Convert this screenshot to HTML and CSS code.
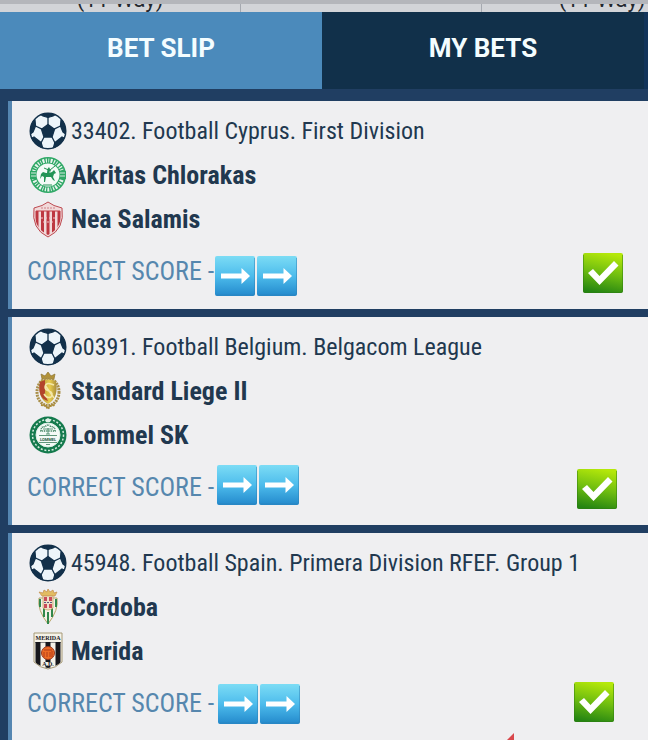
FILE: index.html
```
<!DOCTYPE html>
<html lang="en">
<head>
<meta charset="utf-8">
<meta name="viewport" content="width=device-width, initial-scale=1">
<title>Bet slip</title>
<link rel="stylesheet" href="styles.css">
</head>
<body>
<svg class="defs" aria-hidden="true">
  <defs>
    <linearGradient id="blue" x1="0" y1="0" x2="0" y2="1"><stop offset="0" stop-color="#7cdcf5"/><stop offset=".5" stop-color="#4dbcec"/><stop offset="1" stop-color="#2389cc"/></linearGradient>
    <linearGradient id="green" x1=".6" y1="0" x2=".4" y2="1"><stop offset="0" stop-color="#b5e80a"/><stop offset=".5" stop-color="#6fbd10"/><stop offset="1" stop-color="#258512"/></linearGradient>
    <linearGradient id="gold" x1="0" y1="0" x2="1" y2="0"><stop offset="0" stop-color="#a98938"/><stop offset=".6" stop-color="#e8cc4c"/><stop offset="1" stop-color="#a98d3c"/></linearGradient>
    <clipPath id="ballclip"><circle cx="19" cy="19" r="18"/></clipPath>
    <clipPath id="salclip"><path d="M6 9Q13 7 19 4Q25 7 32 9Q34 28 19 35Q4 28 6 9Z"/></clipPath>
    <clipPath id="merclip"><path d="M6 10H32V30Q27 35 19 36Q11 35 6 30Z"/></clipPath>
    <symbol id="ball" viewBox="0 0 38 38">
      <circle cx="19" cy="19" r="18" fill="#edf5fa"/>
      <g clip-path="url(#ballclip)" fill="#12304a" stroke="#12304a" stroke-width="1.3" stroke-linejoin="round">
        <path d="M19 12.500L25.500 17.200L23 25H15L12.500 17.200Z"/>
        <path d="M11 2L14 4L19 5.500L24 4L27 2V-2H11Z"/>
        <path d="M32 8L31.500 14L34 20L38 23V8Z"/>
        <path d="M6 8L6.500 14L4 20L0 23V8Z"/>
        <path d="M24 37L26 30.500L33 25L37 27L30 38Z"/>
        <path d="M14 37L12 30.500L5 25L1 27L8 38Z"/>
        <path fill="none" d="M19 13V5M25 17.200L31.500 14M23 25L26 31M15 25L12 31M13 17.200L6.500 14"/>
      </g>
      <circle cx="19" cy="19" r="17.800" fill="none" stroke="#12304a" stroke-width="1.400"/>
    </symbol>
    <symbol id="arrow" viewBox="0 0 40 40">
      <rect width="40" height="40" rx="2" fill="url(#blue)"/>
      <path d="M1 39H38Q39.500 39 39.500 37.500V2" fill="none" stroke="#3082b5" opacity=".5"/>
      <path d="M6 17.500H26.500V12L35 20L26.500 28V22.500H6Z" fill="#fff"/>
    </symbol>
    <symbol id="check" viewBox="0 0 40 40">
      <rect width="40" height="40" rx="2" fill="url(#green)"/>
      <path d="M.5 2V38Q.5 39.500 2 39.500H38Q39.500 39.500 39.500 38V2" fill="none" stroke="#2d7c12" opacity=".5"/>
      <path d="M5 20L10 16L16.500 23L31 8L35.500 12.500L16.500 32Z" fill="#fff"/>
    </symbol>
  </defs>
</svg>

<div class="odds"><span>(11 Way)</span><span></span><span>(11 Way)</span></div>
<nav class="tabs">
  <button class="tab active" type="button">BET SLIP</button>
  <button class="tab" type="button">MY BETS</button>
</nav>

<main class="slips">
  <article class="slip first">
    <p class="row event"><svg class="crest"><use href="#ball"/></svg>33402. Football Cyprus. First Division</p>
    <p class="row team"><svg class="crest" viewBox="0 0 38 38">
      <circle cx="19" cy="19" r="18" fill="#2fa866"/>
      <circle cx="19" cy="19" r="14.500" fill="none" stroke="#e9f4ee" stroke-width="4" stroke-dasharray="1.200 1.500 .8 1.400 2 1.300"/>
      <path d="M1 15H7V23H1ZM31 15H37V23H31Z" fill="#2fa866"/>
      <path d="M2 17H7M2 20H7M31 17H36M31 20H36" stroke="#d5eadf"/>
      <circle cx="19" cy="19" r="11.500" fill="#f3faf6"/>
      <path d="M12 18L14 16L17 17H20L23 16L25 14L27 17L25 18L24 21L26 25L24 24L22 21L17 21L16 26H15L15 21L13 20L11 23Z" fill="#229455"/>
      <path d="M18 17L18.500 13L20 11L21 13L20.500 17Z" fill="#229455"/>
      <path d="M21 14L26 10M15 12L22 15M14 29H23" stroke="#229455"/>
    </svg>Akritas Chlorakas</p>
    <p class="row team"><svg class="crest" viewBox="0 0 38 38">
      <path d="M5 8Q14 6 19 2Q24 6 33 8Q36 29 19 37Q2 29 5 8Z" fill="#f1d9d9" stroke="#bd4950"/>
      <g clip-path="url(#salclip)"><path d="M8 11V34M13.500 11V36M19 11V36M24.500 11V36M30 11V34" stroke="#bd3740" stroke-width="3"/></g>
      <path d="M7 11H31" stroke="#c43c45"/><path d="M12 8H26" stroke="#cf8187" stroke-dasharray="2 1"/>
      <path d="M12 18H26M14 22H24" stroke="#f0c5c8" stroke-dasharray="2 2"/>
    </svg>Nea Salamis</p>
    <p class="row score">CORRECT SCORE -</p>
    <div class="stickers arrows"><svg><use href="#arrow"/></svg><svg><use href="#arrow"/></svg></div>
    <div class="stickers won"><svg><use href="#check"/></svg></div>
  </article>

  <article class="slip second">
    <p class="row event"><svg class="crest"><use href="#ball"/></svg>60391. Football Belgium. Belgacom League</p>
    <p class="row team"><svg class="crest" viewBox="0 0 38 38">
      <path d="M13 7L12 2L16 4L19 0L22 4L26 2L25 7Z" fill="#b29238" stroke="#8c7430" stroke-width=".7"/>
      <ellipse cx="19" cy="20" rx="11" ry="13.500" fill="none" stroke="#a98f49" stroke-width="3" stroke-dasharray="2 .8"/>
      <path d="M11 9Q19 6 27 9Q30 26 19 32Q8 26 11 9Z" fill="url(#gold)"/>
      <path d="M11 10L16 8V23L19 29Q8 26 11 10Z" fill="#b3442b"/>
      <path d="M25 13Q17 9 16 15Q16 18 20 19Q25 21 22 25Q18 27 15 22M16 13L25 26" fill="none" stroke="#f4e7a8" stroke-width="1.500"/>
      <path d="M12 33L17 34L19 37L21 34L26 33" fill="none" stroke="#aa8b35" stroke-width="2" stroke-dasharray="2 1"/>
    </svg>Standard Liege II</p>
    <p class="row team"><svg class="crest" viewBox="0 0 38 38">
      <circle cx="19" cy="19" r="18.500" fill="#147a4d"/>
      <circle cx="19" cy="19" r="15.500" fill="none" stroke="#d5ebdf" stroke-width="1.500" stroke-dasharray="2 1.700"/>
      <circle cx="19" cy="19" r="12" fill="#f4faf7" stroke="#dceee5"/>
      <path d="M16 4L19 2L22 4L21 6H17Z" fill="#e1f1e8"/>
      <path d="M12 15Q12 10 16 11Q19 7 22 11Q26 10 26 15Z" fill="none" stroke="#397d5b" stroke-width="1.500" stroke-dasharray="1 .8"/>
      <path d="M14 13H24M19 12V18M17 18H21M10 19.500H28M10 26.500H28M17 28.500H21" stroke="#397d5b" stroke-width=".8"/>
      <text x="19" y="25" text-anchor="middle" class="lommel">LOMMEL</text>
    </svg>Lommel SK</p>
    <p class="row score">CORRECT SCORE -</p>
    <div class="stickers arrows"><svg><use href="#arrow"/></svg><svg><use href="#arrow"/></svg></div>
    <div class="stickers won"><svg><use href="#check"/></svg></div>
  </article>

  <article class="slip third">
    <p class="row event"><svg class="crest"><use href="#ball"/></svg>45948. Football Spain. Primera Division RFEF. Group 1</p>
    <p class="row team"><svg class="crest" viewBox="0 0 38 38">
      <path d="M13 8L10 4L14 5L15 2L18 4L19 1L21 4L24 2L25 5L28 4L26 8Z" fill="#e2bc61" stroke="#c48c4c" stroke-width=".7"/>
      <path d="M10 10H28Q30 22 19 36Q8 22 10 10Z" fill="#f4f1e8" stroke="#b8a568"/>
      <path d="M11 11V19M15 10V29M19 24V36M23 10V29M27 11V19" stroke="#32884c" stroke-width="2"/>
      <path d="M14 8H24V20Q19 24 14 20Z" fill="#eee0c9" stroke="#c99c59" stroke-width=".7"/>
      <path d="M15 9H18V13H15ZM20 9H23V13H20ZM15 16H18V20H15ZM20 16H23V20H20Z" fill="#c94b58"/>
      <path d="M15 14.500H24" stroke="#5d5780" stroke-dasharray="2 1"/>
    </svg>Cordoba</p>
    <p class="row team"><svg class="crest" viewBox="0 0 38 38">
      <path d="M5 1H33V30Q27 36 19 37Q11 36 5 30Z" fill="#f5f2e8" stroke="#a69976"/>
      <g clip-path="url(#merclip)"><path d="M9 9V36M19 9V36M29 9V36" stroke="#17171c" stroke-width="5"/><path d="M6 10H32" stroke="#17171c"/></g>
      <text x="19" y="8" text-anchor="middle" class="merida">MERIDA</text>
      <circle cx="19" cy="21" r="6.500" fill="#ed6b24" stroke="#98361d"/>
      <path d="M15 18H23M15 20V25M18 20V25M21 20V25M23 19V25" stroke="#b23d1b"/>
      <path d="M14 30H24V34H14Z" fill="#f5f2e8"/>
      <text x="19" y="34" text-anchor="middle" class="merida">A.D.</text>
    </svg>Merida</p>
    <p class="row score">CORRECT SCORE -</p>
    <div class="stickers arrows"><svg><use href="#arrow"/></svg><svg><use href="#arrow"/></svg></div>
    <div class="stickers won"><svg><use href="#check"/></svg></div>
    <svg class="marker" viewBox="0 0 8 8"><path d="M0 8L8 0V8Z" fill="#d8484c"/></svg>
  </article>
</main>
</body>
</html>
```
FILE: styles.css
```
* { box-sizing: border-box; }
body {
  margin: 0;
  min-height: 100vh;
  overflow: hidden;
  background: #203e62;
  color: #21384f;
  font-family: "Roboto Condensed", Roboto, sans-serif;
}
.defs { position: absolute; width: 0; height: 0; }
.odds {
  display: grid;
  grid-template-columns: repeat(3, 37.2%);
  height: 12px;
  overflow: hidden;
  border-top: 4px solid #b4b6bb;
  background: #d2d4d8;
  color: #23282f;
  font: 22px/24px Roboto, sans-serif;
  text-align: center;
}
.odds span {
  display: flex;
  align-items: flex-end;
  justify-content: center;
  height: 8px;
  overflow: hidden;
  border-right: 1px solid #a5a9b0;
}
.tabs {
  display: grid;
  grid-template-columns: 1fr 1fr;
  padding-right: 4px;
  background: #12345a;
}
.tab {
  height: 77px;
  padding: 0 0 6px;
  border: 0;
  background: #11304a;
  color: #f4fdff;
  font: bold 26px/32px Roboto, sans-serif;
}
.tab.active { background: #4b8abb; }
.slips {
  display: grid;
  gap: 8px;
  padding: 12px 0 0 8px;
}
.slip {
  position: relative;
  padding: 8px 16px 8px 15px;
  overflow: hidden;
  border-left: 4px solid #5586b1;
  background: #efeff1;
}
.row {
  display: flex;
  align-items: center;
  height: 44px;
  margin: 0;
  font-size: 24px;
  line-height: 32px;
  white-space: nowrap;
}
.team { font-size: 26px; font-weight: bold; }
.score { height: 60px; color: #5687ae; font-size: 26px; }
.crest { flex: none; width: 38px; height: 38px; margin: 0 4px 0 2px; }
.stickers { position: absolute; display: flex; gap: 2px; }
.stickers svg { width: 40px; height: 40px; }
.first .arrows { left: 203px; top: 155px; }
.second .arrows { left: 205px; top: 148px; }
.third .arrows { left: 206px; top: 151px; }
.first .won { right: 25px; top: 152px; }
.second .won { right: 31px; top: 152px; }
.third .won { right: 34px; top: 149px; }
.marker { position: absolute; right: 134px; bottom: 0; width: 8px; height: 8px; }
.lommel { font: bold 4px Roboto, sans-serif; fill: #25583f; }
.merida { font: bold 6px "Liberation Serif", serif; fill: #17171c; }
```
